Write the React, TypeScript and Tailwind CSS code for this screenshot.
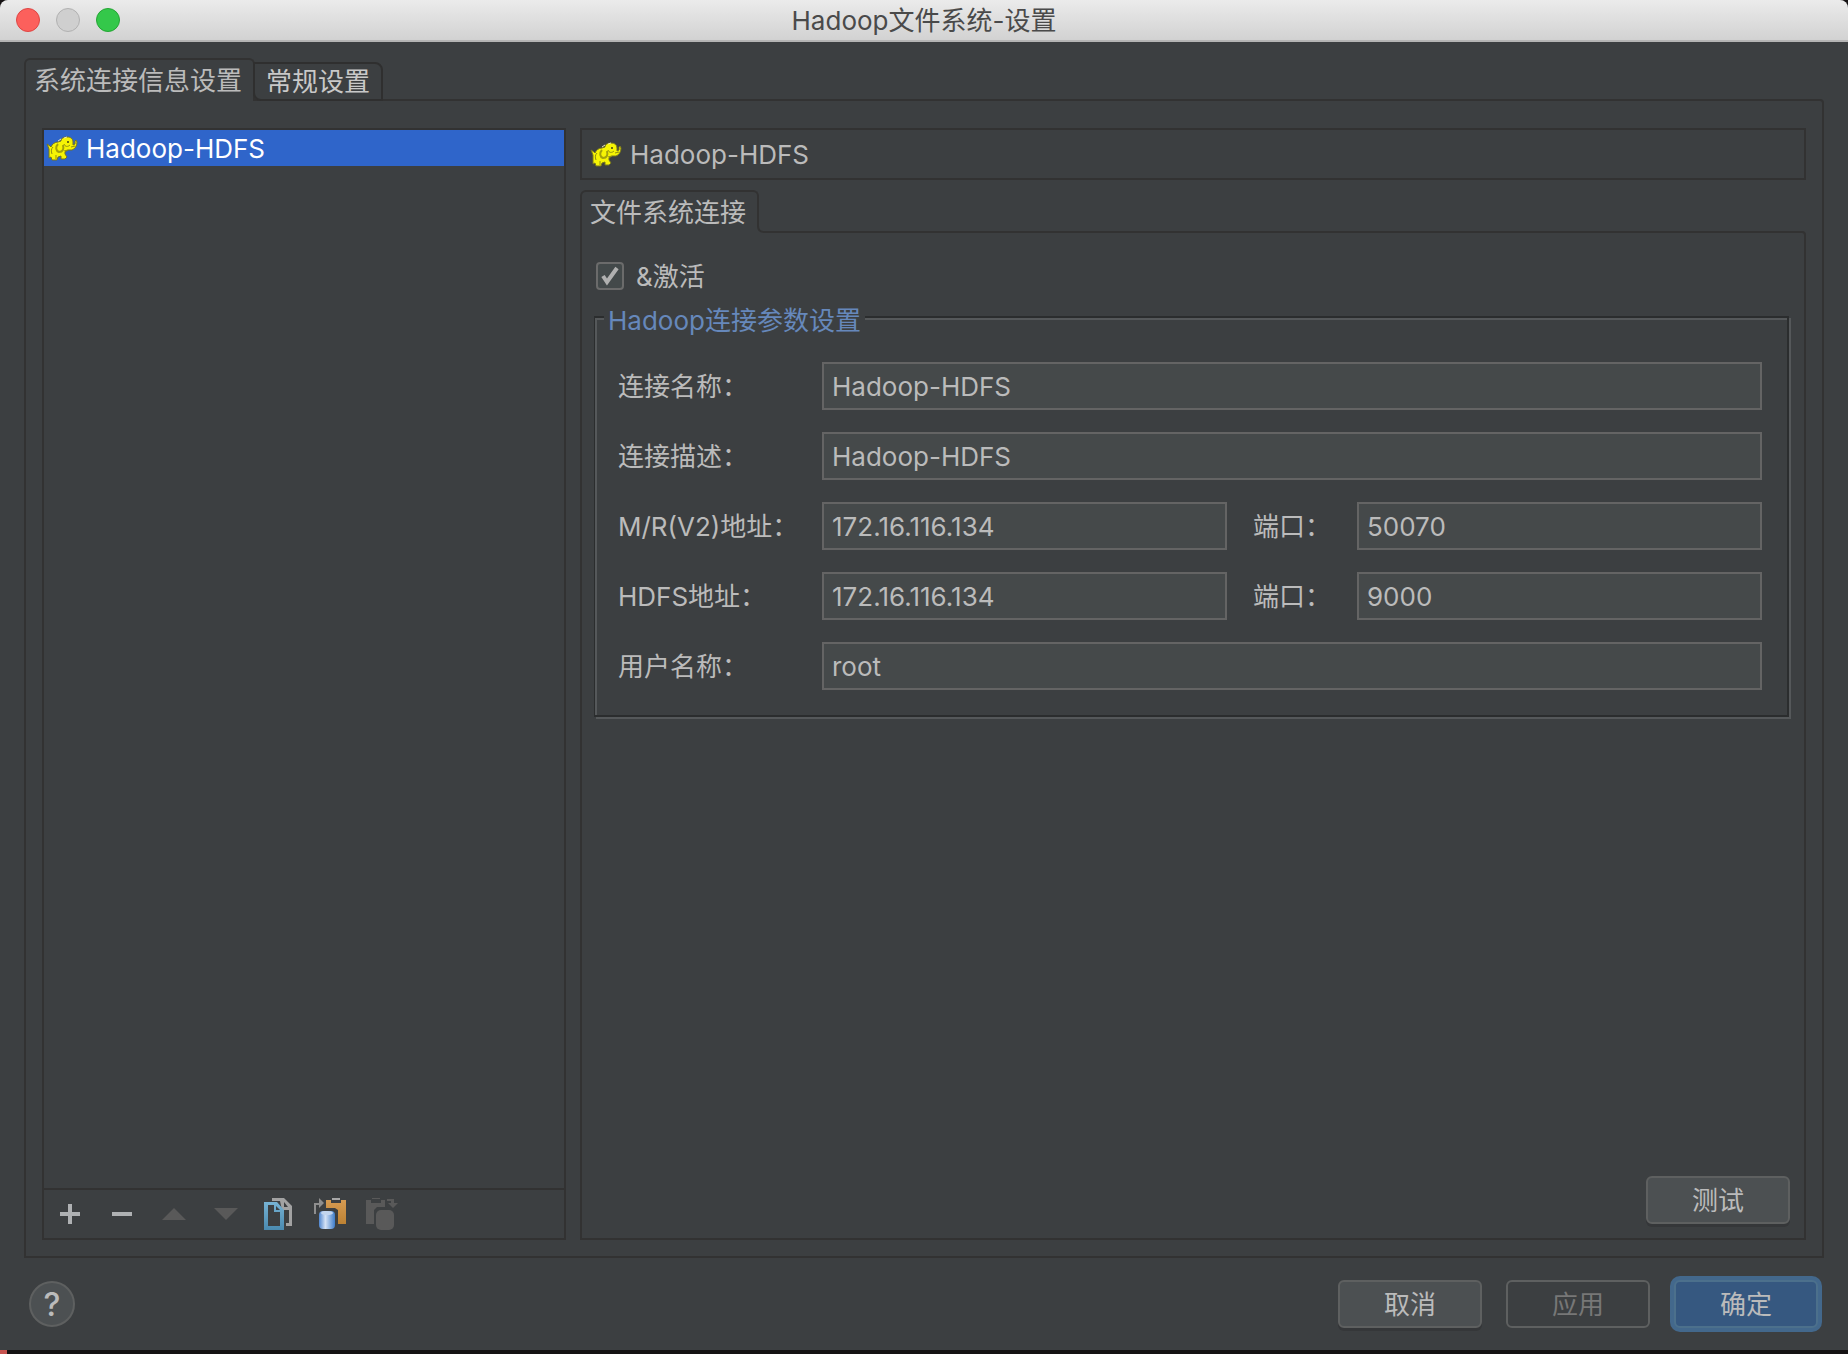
import { ReactNode, useState } from "react";

const fontStack = "font-[Inter,'Noto_Sans_CJK_SC',sans-serif]";

function ElephantIcon() {
  return (
    <svg className="w-8 h-8 shrink-0" viewBox="0 0 32 32" fill="none" aria-hidden="true">
      <path
        d="M1 11l3 2 1 1c1-3 4-5 7-5l3-1c0-3 3-4 6-4 4 0 6 2 6 5l0 3 2-1v-3l1-1 1 2c0 4-2 7-5 8l-4 0-3 2 0 2 2 3-2 2h-4v-3l-3 1-1 3H6l-1-3-2 1 0-5 0-4z"
        fill="#f6f404"
        stroke="#77761e"
      />
      <path d="M12 11c-3 3-2 7 1 8 4 0 5-3 4-7" stroke="#a3a10c" strokeWidth="2" />
      <path d="M7 14c-2 2-2 4-1 7M18 11c1 3 4 3 6 1M10 22v4M18 18l4-1M25 14l4-1" stroke="#8f8e12" />
      <path d="M12 8l3-2M18 5l3-1" stroke="#e8e8b8" />
      <circle cx="22" cy="9" r="1" fill="#3f3f10" />
    </svg>
  );
}

function PlusIcon() {
  return (
    <svg className="w-8 h-8" viewBox="0 0 32 32" fill="#afb1b3" aria-hidden="true">
      <path d="M14 6h4v8h8v4h-8v8h-4v-8H6v-4h8z" />
    </svg>
  );
}

function MinusIcon() {
  return (
    <svg className="w-8 h-8" viewBox="0 0 32 32" fill="#afb1b3" aria-hidden="true">
      <path d="M6 14h20v4H6z" />
    </svg>
  );
}

function UpIcon() {
  return (
    <svg className="w-8 h-8" viewBox="0 0 32 32" fill="#595959" aria-hidden="true">
      <path d="M16 10l12 12H4z" />
    </svg>
  );
}

function DownIcon() {
  return (
    <svg className="w-8 h-8" viewBox="0 0 32 32" fill="#595959" aria-hidden="true">
      <path d="M4 10h24L16 22z" />
    </svg>
  );
}

function CopyIcon() {
  return (
    <svg className="w-8 h-8" viewBox="0 0 32 32" fill="none" aria-hidden="true">
      <defs>
        <linearGradient id="copyBlue" x1="0" y1="0" x2="0" y2="1">
          <stop offset="0" stopColor="#76b2d3" />
          <stop offset="1" stopColor="#4a8ab0" />
        </linearGradient>
      </defs>
      <path d="M10 0h12l8 8v20h-6v-3h3V12h-7L18 3h-8z" fill="#a2a2a2" />
      <path d="M22 4l4 5h-4z" fill="#3c3f41" />
      <path fillRule="evenodd" d="M2 4h13l7 8v20H2zM6 7v21h12V14h-6V7zM14 8v4h4z" fill="url(#copyBlue)" />
    </svg>
  );
}

function PasteIcon() {
  return (
    <svg className="w-8 h-8" viewBox="0 0 32 32" fill="none" aria-hidden="true">
      <defs>
        <linearGradient id="pasteOrange" x1="0" y1="0" x2="0" y2="1">
          <stop offset="0" stopColor="#d69b52" />
          <stop offset="1" stopColor="#bd8233" />
        </linearGradient>
        <linearGradient id="pasteBlue" x1="0" y1="0" x2="1" y2="0">
          <stop offset="0" stopColor="#4f86cf" />
          <stop offset="0.4" stopColor="#d5e2f5" />
          <stop offset="1" stopColor="#3d7cc9" />
        </linearGradient>
      </defs>
      <path d="M12 2h5v3h10V2h5v24h-8V12l-3-2h-9z" fill="url(#pasteOrange)" />
      <path d="M18 0h8v2h-8z" fill="#a8a8a8" />
      <path d="M1 16V6h6" stroke="#8e8e8e" strokeWidth="2" />
      <path d="M5 0l5 5-5 5z" fill="#8e8e8e" />
      <rect x="5" y="13" width="16" height="18" rx="4" fill="url(#pasteBlue)" />
      <ellipse cx="13" cy="15" rx="6" ry="2" fill="#c3d5ee" />
    </svg>
  );
}

function PasteDisabledIcon() {
  return (
    <svg className="w-8 h-8" viewBox="0 0 32 32" fill="#595959" aria-hidden="true">
      <path d="M0 2h5v3h10V2h4v7h-8l-3 3v14H0z" />
      <path d="M6 0h8v1H6z" />
      <path d="M21 1h7v4h4l-5 5-5-5h3V3h-4z" />
      <rect x="10" y="12" width="18" height="20" rx="5" />
    </svg>
  );
}

function ToolButton({ label, disabled, children }: { label: string; disabled?: boolean; children: ReactNode }) {
  return (
    <button type="button" aria-label={label} disabled={disabled} className="flex items-center justify-center w-[52px] h-12">
      {children}
    </button>
  );
}

// outward curve where a tab meets the line of its panel
function TabFlare() {
  return (
    <svg className="absolute -right-[10px] bottom-0 size-[10px]" viewBox="0 0 10 10" fill="none" aria-hidden="true">
      <path d="M0 0h10v10H0z" fill="#3c3f41" />
      <path d="M1 0v3c0 4 2 6 6 6h3" stroke="#323232" strokeWidth="2" />
    </svg>
  );
}

type FieldProps = {
  id: string;
  label: string;
  value: string;
  wide?: boolean;
  port?: boolean;
};

function Field({ id, label, value, wide, port }: FieldProps) {
  return (
    <>
      <label htmlFor={id} className={`pt-[2px] ${port ? "pl-[26px]" : ""}`}>{label}</label>
      <input
        id={id}
        type="text"
        defaultValue={value}
        className={`w-full min-w-0 h-12 px-2 bg-[#45494a] border-2 border-[#646464] outline-none ${wide ? "col-span-3" : ""}`}
      />
    </>
  );
}

const tabBase = "relative h-[43px] px-2 rounded-t-md border-2 border-b-0 border-[#323232] bg-[#3c3f41] text-left whitespace-nowrap";
const buttonBase = "w-36 h-12 pt-[2px] rounded-md border-2 flex items-center justify-center";

export default function App() {
  const [active, setActive] = useState(true);

  return (
    <div className="min-h-screen bg-[#151213]">
      <div className={`flex flex-col h-[calc(100vh-4px)] min-h-[900px] rounded-t-lg overflow-hidden bg-[#3c3f41] text-[#bbbbbb] text-[26px] leading-8 ${fontStack}`}>
        <header className="relative flex items-center justify-center h-[42px] pt-[2px] shrink-0 bg-linear-to-b from-[#ebebeb] to-[#d2d2d2] border-b-2 border-[#b4b4b4] text-[#4a4a4a]">
          <div className="absolute left-4 top-2 flex gap-4">
            <button type="button" aria-label="关闭" className="size-6 rounded-full bg-[#fc605c] border border-[#dd4644]" />
            <button type="button" aria-label="最小化" className="size-6 rounded-full bg-[#cfcfcf] border border-[#b1b1b1]" />
            <button type="button" aria-label="缩放" className="size-6 rounded-full bg-[#34c84a] border border-[#25a534]" />
          </div>
          <h1>Hadoop文件系统-设置</h1>
        </header>

        <main className="flex flex-col grow min-h-0 px-6 pt-4">
          <div role="tablist" className="flex items-end h-[43px] -mb-[2px] shrink-0 z-10">
            <button type="button" role="tab" aria-selected="true" className={`${tabBase} w-[231px]`}>
              系统连接信息设置
            </button>
            <button type="button" role="tab" aria-selected="false" className="relative h-[39px] -ml-[2px] px-[11px] rounded-tr-lg rounded-bl-lg border-2 border-[#2f2f2f] whitespace-nowrap text-[#c8c8c8]">
              常规设置
            </button>
          </div>

          <div className="flex gap-[14px] grow min-h-0 px-4 pt-[27px] pb-4 border-2 border-[#323232] rounded-tr-sm">
            <aside className="flex flex-col w-[524px] shrink-0 border-2 border-[#323232]">
              <ul className="grow">
                <li className="flex items-center gap-2 h-9 px-[2px] pt-[2px] bg-[#2f65ca] text-white">
                  <ElephantIcon />
                  Hadoop-HDFS
                </li>
              </ul>
              <div className="flex h-[50px] border-t-2 border-[#323232]">
                <ToolButton label="添加"><PlusIcon /></ToolButton>
                <ToolButton label="删除"><MinusIcon /></ToolButton>
                <ToolButton label="上移" disabled><UpIcon /></ToolButton>
                <ToolButton label="下移" disabled><DownIcon /></ToolButton>
                <ToolButton label="复制"><CopyIcon /></ToolButton>
                <ToolButton label="导出"><PasteIcon /></ToolButton>
                <ToolButton label="导入" disabled><PasteDisabledIcon /></ToolButton>
              </div>
            </aside>

            <section className="flex flex-col grow min-w-0">
              <div className="flex items-center gap-2 h-[52px] shrink-0 px-2 pt-[2px] border-2 border-[#323232]">
                <ElephantIcon />
                <h2>Hadoop-HDFS</h2>
              </div>

              <div role="tablist" className="flex mt-[10px] -mb-[2px] shrink-0 z-10">
                <button type="button" role="tab" aria-selected="true" className={`${tabBase} w-[179px]`}>
                  文件系统连接
                  <TabFlare />
                </button>
              </div>

              <div className="flex flex-col grow pl-3 pr-[14px] pt-[27px] pb-[14px] border-2 border-[#323232] rounded-tr-sm">
                <label className="flex items-center gap-3 h-8 pl-[2px] self-start">
                  <span className="relative flex size-7">
                    <input
                      type="checkbox"
                      checked={active}
                      onChange={(e) => setActive(e.target.checked)}
                      className="appearance-none size-7 rounded border-2 border-[#6b6b6b] bg-[#43494a]"
                    />
                    {active && (
                      <svg className="absolute inset-0 size-7 pointer-events-none" viewBox="0 0 28 28" fill="none" aria-hidden="true">
                        <path d="M7 14l4 6L21 6" stroke="#b0b0b0" strokeWidth="4" />
                      </svg>
                    )}
                  </span>
                  <span className="pt-[2px]">&amp;激活</span>
                </label>

                <fieldset className="mt-[5px] mr-px pl-[23px] pr-[25px] pt-[25px] pb-[25px] border-2 border-l border-[#2b2d2e] shadow-[inset_2px_2px_0_#55585a,2px_2px_0_#55585a]">
                  <legend className="-ml-[14px] pt-2 px-1 bg-[#3c3f41] text-[#6688bb]">Hadoop连接参数设置</legend>
                  <div className="grid grid-cols-[204px_minmax(0,1fr)_130px_minmax(0,1fr)] items-center gap-y-[22px]">
                    <Field id="name" label="连接名称：" value="Hadoop-HDFS" wide />
                    <Field id="description" label="连接描述：" value="Hadoop-HDFS" wide />
                    <Field id="mr-host" label="M/R(V2)地址：" value="172.16.116.134" />
                    <Field id="mr-port" label="端口：" value="50070" port />
                    <Field id="hdfs-host" label="HDFS地址：" value="172.16.116.134" />
                    <Field id="hdfs-port" label="端口：" value="9000" port />
                    <Field id="user" label="用户名称：" value="root" wide />
                  </div>
                </fieldset>

                <button type="button" className={`${buttonBase} mt-auto ml-auto bg-[#4c5052] border-[#5e6060] shadow-[0_3px_0_#353739]`}>
                  测试
                </button>
              </div>
            </section>
          </div>
        </main>

        <footer className="flex items-center gap-6 h-[92px] shrink-0 pl-[29px] pr-[30px]">
          <button type="button" aria-label="帮助" className="size-[46px] mr-auto pt-[2px] rounded-full border-2 border-[#5e6060] bg-[#4c5052] flex items-center justify-center font-medium text-[32px]">
            ?
          </button>
          <button type="button" className={`${buttonBase} bg-[#4c5052] border-[#5e6060] shadow-[0_3px_0_#353739]`}>取消</button>
          <button type="button" disabled className={`${buttonBase} border-[#5e6060] text-[#777777]`}>应用</button>
          <button type="button" className={`${buttonBase} bg-[#365880] border-[#4c708c] ring-4 ring-[#43688c]`}>确定</button>
        </footer>
      </div>
      <div className="w-[7px] h-1 bg-[#c75450]" />
    </div>
  );
}
